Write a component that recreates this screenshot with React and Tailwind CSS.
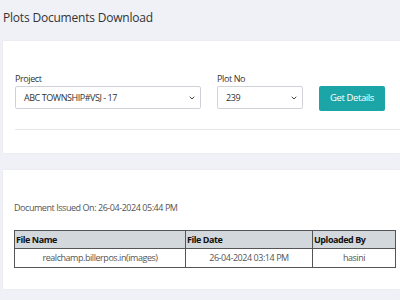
import { ChevronDown } from 'lucide-react';

// === SELECT FIELD ===
const SelectBox = ({ label, value, width }) => (
  <div className="flex flex-col">
    <span className="text-[9px] leading-[12px] tracking-[-0.4px] text-[#333] mb-[1px]">{label}</span>
    <div className={`${width} h-[23px] flex items-center justify-between border border-[#cfd3d8] rounded-[2px] bg-white pl-[8px] pr-[4px]`}>
      <span className="text-[9px] tracking-[-0.45px] text-[#333]">{value}</span>
      <ChevronDown size={8} strokeWidth={3} className="text-[#444]" />
    </div>
  </div>
);

const App = () => {
  const rows = [
    { name: 'realchamp.billerpos.in(images)', date: '26-04-2024 03:14 PM', by: 'hasini' },
  ];

  return (
    <div className="w-[400px] h-[300px] overflow-hidden bg-[#f0f1f7] pl-[3px]" style={{ fontFamily: '"Open Sans", "Noto Sans", sans-serif' }}>
      {/* Page title */}
      <div className="h-[41px] flex items-center">
        <h1 className="text-[12px] font-medium tracking-[-0.2px] text-[#333] -mt-[6px]">Plots Documents Download</h1>
      </div>

      {/* Filter card */}
      <div className="bg-white h-[112px] pt-[32px] pl-[12px] shadow-[0_0_2px_rgba(0,0,0,0.06)]">
        <div className="flex items-end">
          <SelectBox label="Project" value="ABC TOWNSHIP#VSJ - 17" width="w-[186px]" />
          <div className="ml-[16px]">
            <SelectBox label="Plot No" value="239" width="w-[86px]" />
          </div>
          <button className="ml-[16px] w-[66px] h-[25px] bg-[#1ba5a6] rounded-[2px] text-white text-[9.5px] tracking-[-0.4px] mb-[-2px]">
            Get Details
          </button>
        </div>
        <div className="mt-[20px] border-t border-[#e6e7eb]" />
      </div>

      {/* Documents card */}
      <div className="mt-[17px] bg-white h-[119px] pt-[32px] pl-[11px] pr-[4px] shadow-[0_0_2px_rgba(0,0,0,0.06)]">
        <p className="text-[9px] tracking-[-0.45px] text-[#555] leading-[12px]">Document Issued On: 26-04-2024 05:44 PM</p>
        <table className="mt-[16px] w-[382px] border-collapse text-[9px] tracking-[-0.45px]">
          <thead>
            <tr className="bg-[#d3d8dd] h-[18px]">
              <th className="w-[171px] border border-[#555] text-left font-bold text-[#111] px-[1px]">File Name</th>
              <th className="w-[127px] border border-[#555] text-left font-bold text-[#111] px-[1px]">File Date</th>
              <th className="border border-[#555] text-left font-bold text-[#111] px-[1px]">Uploaded By</th>
            </tr>
          </thead>
          <tbody>
            {rows.map((r) => (
              <tr key={r.name} className="h-[19px]">
                <td className="border border-[#555] text-center text-[#555]">{r.name}</td>
                <td className="border border-[#555] text-center text-[#555]">{r.date}</td>
                <td className="border border-[#555] text-center text-[#555]">{r.by}</td>
              </tr>
            ))}
          </tbody>
        </table>
      </div>
    </div>
  );
};

export default App;
